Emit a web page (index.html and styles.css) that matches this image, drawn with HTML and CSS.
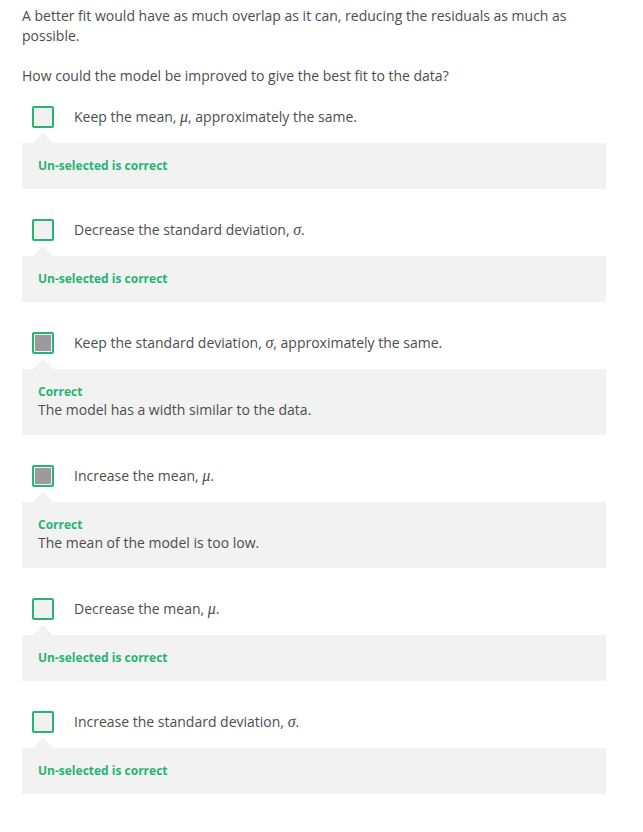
FILE: index.html
```html
<!DOCTYPE html>
<html>
<head>
<meta charset="utf-8">
<link rel="stylesheet" href="styles.css">
</head>
<body>
<div class="page">
  <p class="para">A better fit would have as much overlap as it can, reducing the residuals as much as possible.</p>
  <p class="para">How could the model be improved to give the best fit to the data?</p>

  <div class="options">
    <div class="option">
      <div class="row"><span class="box"></span><span class="label">Keep the mean, <span class="math">μ</span>, approximately the same.</span></div>
      <div class="feedback"><div class="fb-title">Un-selected is correct</div></div>
    </div>
    <div class="option">
      <div class="row"><span class="box"></span><span class="label">Decrease the standard deviation, <span class="math">σ</span>.</span></div>
      <div class="feedback"><div class="fb-title">Un-selected is correct</div></div>
    </div>
    <div class="option">
      <div class="row"><span class="box checked"></span><span class="label">Keep the standard deviation, <span class="math">σ</span>, approximately the same.</span></div>
      <div class="feedback"><div class="fb-title">Correct</div><div class="fb-text">The model has a width similar to the data.</div></div>
    </div>
    <div class="option">
      <div class="row"><span class="box checked"></span><span class="label">Increase the mean, <span class="math">μ</span>.</span></div>
      <div class="feedback"><div class="fb-title">Correct</div><div class="fb-text">The mean of the model is too low.</div></div>
    </div>
    <div class="option">
      <div class="row"><span class="box"></span><span class="label">Decrease the mean, <span class="math">μ</span>.</span></div>
      <div class="feedback"><div class="fb-title">Un-selected is correct</div></div>
    </div>
    <div class="option">
      <div class="row"><span class="box"></span><span class="label">Increase the standard deviation, <span class="math">σ</span>.</span></div>
      <div class="feedback"><div class="fb-title">Un-selected is correct</div></div>
    </div>
  </div>
</div>
</body>
</html>
```
FILE: styles.css
```css
html, body {
  margin: 0;
  padding: 0;
  background: #fff;
}
body {
  font-family: "Open Sans", "Noto Sans", sans-serif;
  font-size: 14px;
  line-height: 20px;
  color: #4d4d4d;
}
.page {
  width: 584px;
  padding: 6px 37px 30px 22px;
}
.para {
  margin: 0 0 20px 0;
}
.options {
  display: flex;
  flex-direction: column;
  gap: 30px;
}
.option {
  display: flex;
  flex-direction: column;
  gap: 15px;
}
.row {
  display: flex;
  align-items: center;
  gap: 20px;
  padding-left: 10px;
  height: 22px;
}
.box {
  box-sizing: border-box;
  width: 22px;
  height: 22px;
  border: 2px solid #26b473;
  border-radius: 2px;
  background: #f1f1f1;
  flex: none;
  position: relative;
}
.box.checked::after {
  content: "";
  position: absolute;
  left: 1px;
  top: 1px;
  width: 16px;
  height: 16px;
  background: #9b9b9b;
}
.math {
  font-family: "Liberation Serif", "DejaVu Serif", serif;
  font-style: italic;
  font-size: 16px;
}
.feedback {
  position: relative;
  background: #f2f2f2;
  padding: 15px 16px;
}
.feedback::before {
  content: "";
  position: absolute;
  left: 11px;
  top: -10px;
  border-left: 10px solid transparent;
  border-right: 10px solid transparent;
  border-bottom: 10px solid #f2f2f2;
}
.fb-title {
  font-weight: 700;
  font-size: 12px;
  line-height: 16px;
  color: #26b473;
}
.fb-text {
  line-height: 20px;
}
```
